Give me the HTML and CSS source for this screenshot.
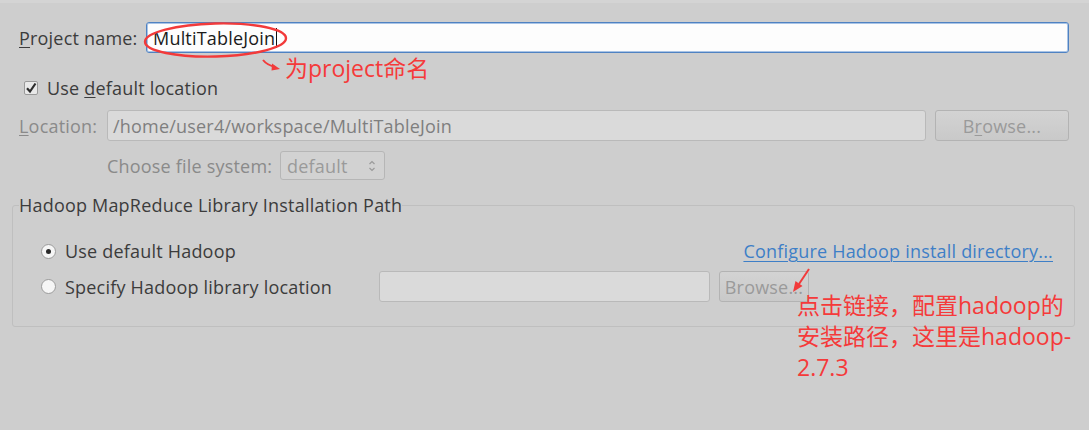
FILE: index.html
```html
<!DOCTYPE html>
<html>
<head>
<meta charset="utf-8">
<link rel="stylesheet" href="styles.css">
</head>
<body>
<div class="page">
  <div class="row row-name">
    <label class="lbl lbl-name"><u>P</u>roject name:</label>
    <div class="text-input active">MultiTableJoin<span class="caret"></span></div>
    <svg class="ann ann-ellipse" width="150" height="42" viewBox="0 0 150 42"><ellipse cx="73.5" cy="19" rx="70.5" ry="16.5" fill="none" stroke="#f23a3a" stroke-width="2.4" transform="rotate(-1.5 73.5 19)"/></svg>
    <svg class="ann ann-arrow1" width="24" height="16" viewBox="0 0 24 16"><path d="M2 3 Q6 8 14 10" fill="none" stroke="#f23a3a" stroke-width="2"/><path d="M19 12 L11 6.5 L10.5 13.5 Z" fill="#f23a3a"/></svg>
    <div class="ann ann-text1">为project命名</div>
  </div>
  <div class="row row-check">
    <span class="checkbox"><svg width="12" height="12" viewBox="0 0 12 12"><path d="M2 6.2 L5 9.5 L10.5 1.5" fill="none" stroke="#2d2d2d" stroke-width="2.2"/></svg></span>
    <span class="lbl">Use <u>d</u>efault location</span>
  </div>
  <div class="row row-loc">
    <label class="lbl dis lbl-loc"><u>L</u>ocation:</label>
    <div class="text-input disabled loc-input">/home/user4/workspace/MultiTableJoin</div>
    <div class="button disabled btn-loc">B<u>r</u>owse...</div>
  </div>
  <div class="row row-fs">
    <label class="lbl dis lbl-fs">Choose file system:</label>
    <div class="select disabled">default<span class="spin"><svg width="8" height="14" viewBox="0 0 8 14"><path d="M1.5 5 L4 2.5 L6.5 5" fill="none" stroke="#9a9a9a" stroke-width="1.2"/><path d="M1.5 9 L4 11.5 L6.5 9" fill="none" stroke="#9a9a9a" stroke-width="1.2"/></svg></span></div>
  </div>
  <fieldset class="group">
    <legend class="lbl legend">Hadoop MapReduce Library Installation Path</legend>
    <div class="grow grow-1">
      <span class="radio checked"></span>
      <span class="lbl">Use default Hadoop</span>
      <a class="link">Configure Hadoop install directory...</a>
    </div>
    <div class="grow grow-2">
      <span class="radio"></span>
      <span class="lbl lbl-spec">Specify Hadoop library location</span>
      <div class="text-input disabled lib-input"></div>
      <div class="button disabled btn-lib">Browse...</div>
      <svg class="ann ann-arrow2" width="24" height="28" viewBox="0 0 24 28"><path d="M19 2 L9 17" fill="none" stroke="#f23a3a" stroke-width="2"/><path d="M3 25 L5.5 14 L12.5 19 Z" fill="#f23a3a"/></svg>
      <div class="ann ann-text2">点击链接，配置hadoop的<br>安装路径，这里是hadoop-<br>2.7.3</div>
    </div>
  </fieldset>
</div>
</body>
</html>
```

FILE: styles.css
```css
html, body {
  margin: 0;
  padding: 0;
  background: #cecece;
}
body {
  width: 1089px;
  height: 430px;
  overflow: hidden;
  font-family: "Open Sans", "Noto Sans", sans-serif;
  font-size: 18px;
  letter-spacing: 0.2px;
  color: #3c3c3c;
  border-top: 3px solid #d4d4d4;
  box-sizing: border-box;
}
u { text-decoration-thickness: 1px; text-underline-offset: 2px; }
.page {
  padding: 19px 20px 0 19px;
}
.row {
  display: flex;
  align-items: center;
  position: relative;
}
.lbl { white-space: nowrap; line-height: 22px; }
.dis { color: #8a8a8a; }
.row-name { height: 31px; }
.lbl-name { flex: 0 0 127px; }
.text-input {
  box-sizing: border-box;
  height: 31px;
  border-radius: 3px;
  display: flex;
  align-items: center;
  white-space: nowrap;
}
.text-input.active {
  flex: 1;
  background: #fdfdfd;
  border: 1px solid #4f82c2;
  box-shadow: inset 0 0 0 1px #a9c4e6;
  padding-left: 6px;
  color: #1a1a1a;
}
.caret {
  display: inline-block;
  width: 1px;
  height: 20px;
  background: #111;
  margin-left: 1px;
}
.text-input.disabled {
  background: #dadada;
  border: 1px solid #b9b9b9;
  color: #7f7f7f;
  padding-left: 5px;
}
.button {
  box-sizing: border-box;
  height: 31px;
  border: 1px solid #b3b3b3;
  border-radius: 3px;
  background: linear-gradient(#d3d3d3, #c9c9c9);
  color: #9a9a9a;
  display: flex;
  align-items: center;
  justify-content: center;
}
.row-check { margin-top: 28px; height: 14px; padding-left: 5px; }
.checkbox {
  box-sizing: border-box;
  width: 14px;
  height: 14px;
  border: 1px solid #9a9a9a;
  border-radius: 2px;
  background: #e9e9e9;
  display: flex;
  align-items: center;
  justify-content: center;
  margin-right: 9px;
}
.row-loc { margin-top: 15px; height: 31px; }
.lbl-loc { flex: 0 0 88px; }
.loc-input { flex: 0 0 819px; }
.btn-loc { flex: 0 0 134px; margin-left: 9px; }
.row-fs { margin-top: 10px; height: 29px; padding-left: 88px; }
.lbl-fs { flex: 0 0 173px; }
.select {
  box-sizing: border-box;
  width: 105px;
  height: 29px;
  border: 1px solid #b6b6b6;
  border-radius: 3px;
  background: #d2d2d2;
  color: #9a9a9a;
  display: flex;
  align-items: center;
  padding-left: 6px;
  position: relative;
}
.spin { margin-left: auto; margin-right: 8px; display: flex; }
.group {
  margin: 14px 0 0 -7px;
  width: 1063px;
  box-sizing: border-box;
  height: 133px;
  border: 1px solid #bfbfbf;
  border-radius: 3px;
  padding: 0 0 0 28px;
}
.legend {
  padding: 0;
  margin-left: -22px;
  line-height: 22px;
}
.grow {
  display: flex;
  align-items: center;
  position: relative;
}
.grow-1 { margin-top: 25px; height: 20px; }
.grow-2 { margin-top: 10px; height: 31px; }
.radio {
  box-sizing: border-box;
  width: 15px;
  height: 15px;
  border-radius: 50%;
  border: 1px solid #9b9b9b;
  background: #f6f6f6;
  margin-right: 9px;
  position: relative;
  flex: 0 0 auto;
}
.radio.checked::after {
  content: "";
  position: absolute;
  left: 4px;
  top: 4px;
  width: 5px;
  height: 5px;
  border-radius: 50%;
  background: #2b2b2b;
}
.link {
  margin-left: auto;
  margin-right: 21px;
  color: #3e7fc7;
  text-decoration: underline;
  text-decoration-thickness: 1px;
  text-underline-offset: 3px;
  white-space: nowrap;
}
.lbl-spec { flex: 0 0 314px; }
.lib-input { flex: 0 0 331px; }
.btn-lib { flex: 0 0 90px; margin-left: 9px; }
.ann { position: absolute; letter-spacing: 0; }
.ann-ellipse { left: 123px; top: -1px; }
.ann-arrow1 { left: 242px; top: 35px; }
.ann-text1 {
  left: 266px;
  top: 32px;
  font-family: "Open Sans", "Noto Sans CJK SC", sans-serif;
  font-size: 23px;
  line-height: 28px;
  color: #f53a3a;
  white-space: nowrap;
}
.ann-arrow2 { left: 749px; top: -4px; }
.ann-text2 {
  left: 756px;
  top: 19px;
  font-family: "Open Sans", "Noto Sans CJK SC", sans-serif;
  font-size: 23px;
  line-height: 31px;
  color: #f53a3a;
  white-space: nowrap;
  z-index: 2;
}
```
